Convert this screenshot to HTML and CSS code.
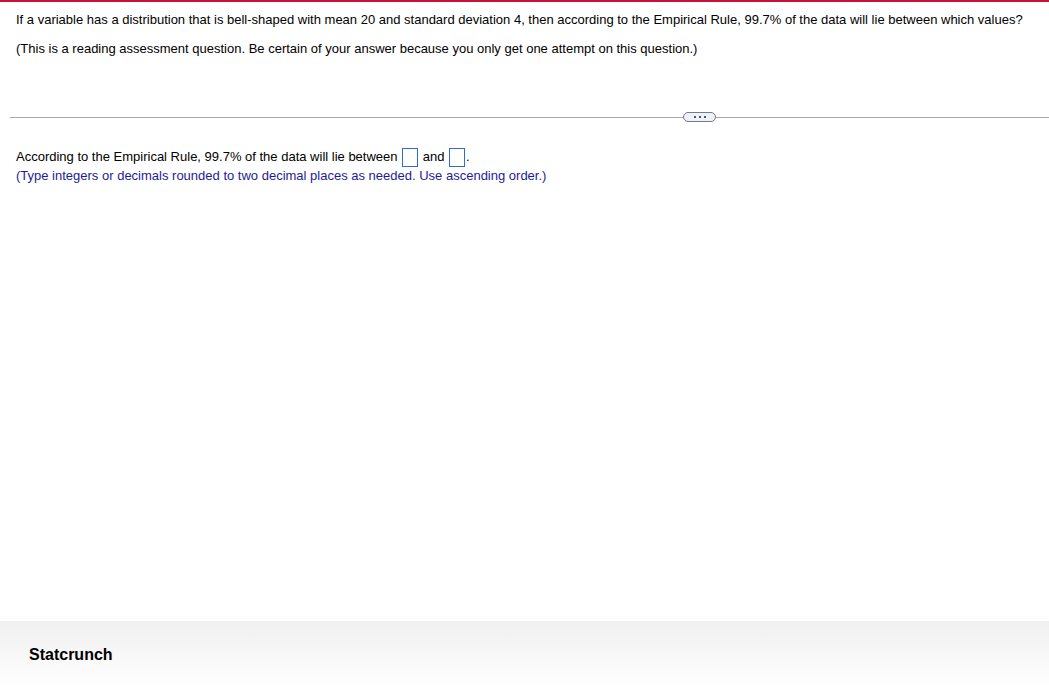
FILE: index.html
```html
<!DOCTYPE html>
<html>
<head>
<meta charset="utf-8">
<link rel="stylesheet" href="styles.css">
</head>
<body>
<div class="page">
  <div class="topbar"></div>
  <div class="question">
    <p class="q1">If a variable has a distribution that is bell-shaped with mean 20 and standard deviation 4, then according to the Empirical Rule, 99.7% of the data will lie between which values?</p>
    <p class="q2">(This is a reading assessment question. Be certain of your answer because you only get one attempt on this question.)</p>
  </div>
  <div class="divider">
    <div class="line"></div>
    <div class="pill"><span></span><span></span><span></span></div>
    <div class="line"></div>
  </div>
  <div class="answer">
    <p class="a1">According to the Empirical Rule, 99.7% of the data will lie between <span class="box"></span> and <span class="box"></span>.</p>
    <p class="hint">(Type integers or decimals rounded to two decimal places as needed. Use ascending order.)</p>
  </div>
  <div class="spacer"></div>
  <div class="footer">
    <span class="brand">Statcrunch</span>
  </div>
</div>
</body>
</html>
```
FILE: styles.css
```css
html, body {
  margin: 0;
  padding: 0;
  background: #fff;
}
body {
  font-family: "Liberation Sans", Arial, sans-serif;
  color: #000;
}
.page {
  width: 1049px;
  height: 688px;
  display: flex;
  flex-direction: column;
  overflow: hidden;
}
.topbar {
  height: 2px;
  background: #c8123c;
  flex: none;
}
.question {
  padding: 0 16px;
}
.q1 {
  margin: 10px 0 0;
  font-size: 13px;
  line-height: 16px;
}
.q2 {
  margin: 13px 0 0;
  font-size: 13px;
  line-height: 16px;
}
.divider {
  display: flex;
  align-items: center;
  margin: 55px 0 0 10px;
  height: 10px;
}
.line {
  height: 1px;
  background: #b7a0aa;
}
.line:first-child {
  width: 673px;
}
.line:last-child {
  flex: 1;
}
.pill {
  width: 31px;
  height: 8px;
  border: 1px solid #6f7c8c;
  border-radius: 5px;
  background: #eef1f5;
  display: flex;
  align-items: center;
  justify-content: center;
  gap: 3px;
}
.pill span {
  width: 2px;
  height: 2px;
  background: #4c5866;
}
.answer {
  padding: 0 16px;
  margin-top: 25px;
}
.a1 {
  margin: 0;
  font-size: 13px;
  line-height: 20px;
  display: flex;
  align-items: center;
  white-space: pre;
}
.box {
  display: inline-block;
  width: 14px;
  height: 17px;
  border: 1px solid #2f6bd8;
  margin: 0 1px;
}
.hint {
  margin: 0;
  font-size: 13px;
  line-height: 17px;
  color: #1c1c99;
}
.spacer {
  flex: 1;
}
.footer {
  height: 67px;
  flex: none;
  background: linear-gradient(#f0f0f0, #ffffff);
  padding: 0 29px;
  display: flex;
  align-items: center;
}
.brand {
  font-size: 16px;
  font-weight: bold;
}
```
